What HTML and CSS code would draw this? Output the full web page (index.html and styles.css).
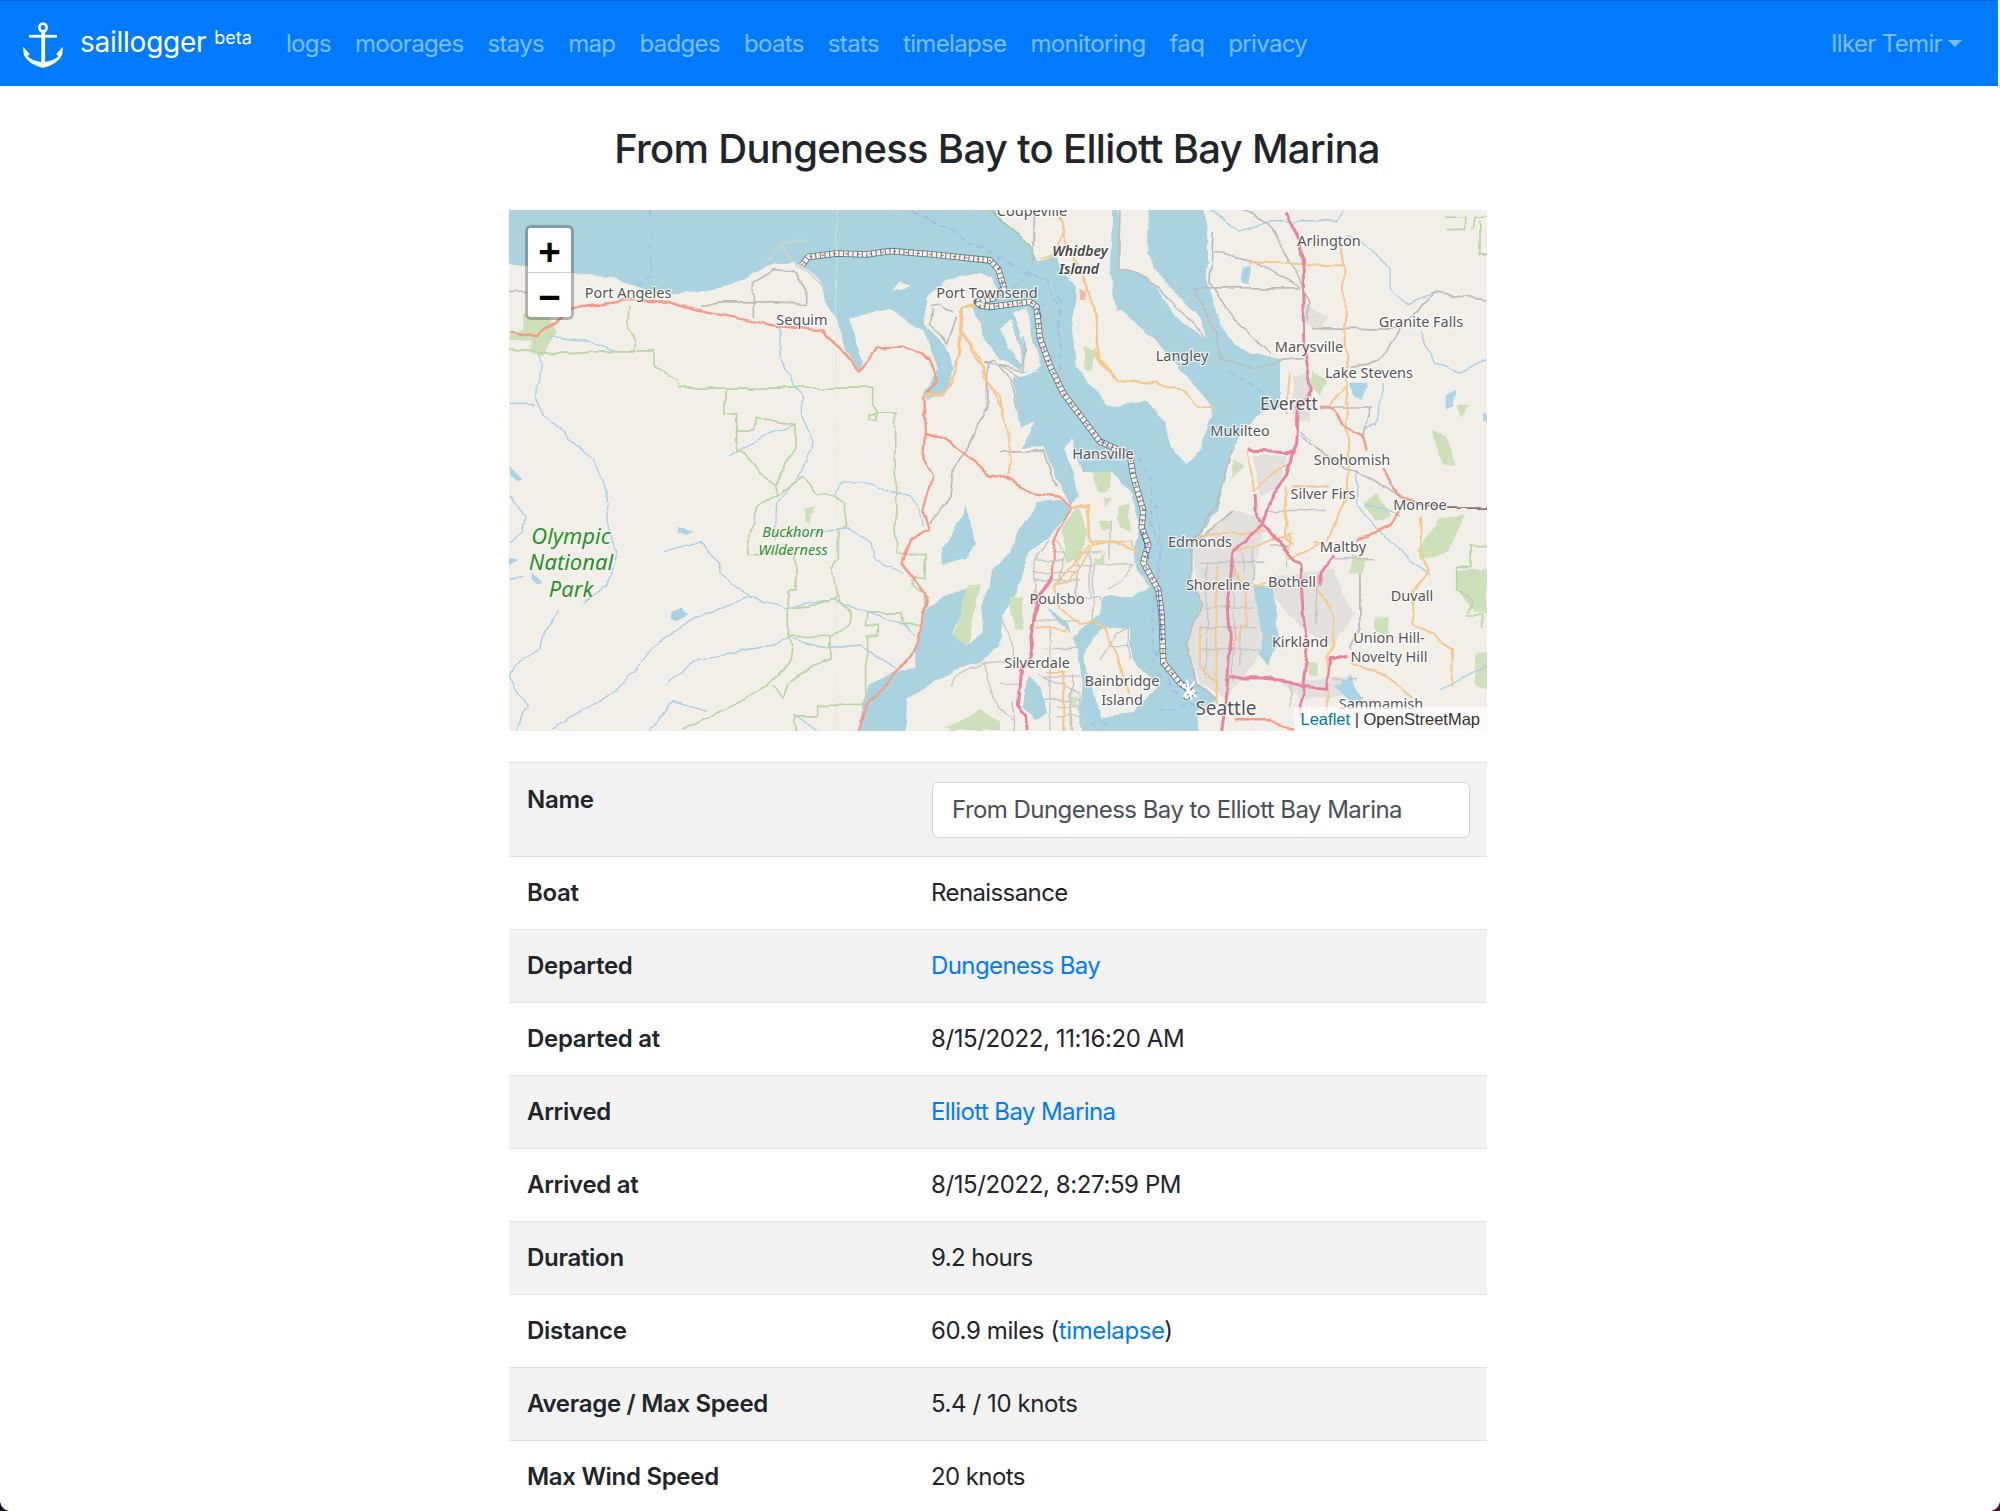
FILE: index.html
```html
<!DOCTYPE html>
<html lang="en">

<head>
  <meta charset="UTF-8">
  <title>From Dungeness Bay to Elliott Bay Marina</title>
  <link rel="stylesheet" href="styles.css">
</head>

<body>
  <nav class="navbar">
    <a class="brand" href="#">
      <svg class="anchor" viewBox="0 0 46 50" width="40" height="46" preserveAspectRatio="none">
        <circle cx="23" cy="6" r="4.2" fill="none" stroke="#fff" stroke-width="3"/>
        <rect x="21" y="10" width="4.4" height="36" fill="#fff"/>
        <rect x="7" y="14" width="32" height="3" fill="#fff"/>
        <path d="M0 27 L1 36 Q6 46 23 50 Q40 46 45 36 L46 27 L38 35 L41 37 Q36 42 23 44 Q10 42 5 37 L8 35 Z" fill="#fff"/>
      </svg>
      <span class="brand-name">saillogger</span>
      <sup class="beta">beta</sup>
    </a>
    <ul class="nav-links">
      <li><a href="#">logs</a></li>
      <li><a href="#">moorages</a></li>
      <li><a href="#">stays</a></li>
      <li><a href="#">map</a></li>
      <li><a href="#">badges</a></li>
      <li><a href="#">boats</a></li>
      <li><a href="#">stats</a></li>
      <li><a href="#">timelapse</a></li>
      <li><a href="#">monitoring</a></li>
      <li><a href="#">faq</a></li>
      <li><a href="#">privacy</a></li>
    </ul>
    <a class="user" href="#">Ilker Temir<i class="caret"></i></a>
  </nav>

  <main class="content">
    <h1 class="title">From Dungeness Bay to Elliott Bay Marina</h1>

    <div class="map">
      <svg class="map-tiles" viewBox="509 210 978 521" width="978" height="521">
        <defs>
          <filter id="soft" x="0" y="0" width="100%" height="100%">
            <feTurbulence type="fractalNoise" baseFrequency="0.05" numOctaves="2" seed="4" result="noise"/>
            <feDisplacementMap in="SourceGraphic" in2="noise" scale="7" xChannelSelector="R" yChannelSelector="G"/>
            <feGaussianBlur stdDeviation="0.6"/>
          </filter>
          <filter id="blur"><feGaussianBlur stdDeviation="0.35"/></filter>
          <path id="route" d="M905 190 L925 165 L1010 155 L1100 158 L1170 148 L1300 158 L1470 175 L1495 200 L1512 255 L1480 285 L1430 295 L1440 305 L1470 310 L1590 295 L1610 310 L1620 400 L1650 480 L1690 560 L1800 700 L1890 740 L1900 800 L1930 900 L1925 950 L1945 1000 L1930 1050 L1975 1130 L1985 1200 L1990 1340 L2040 1400 L2070 1420 L2060 1440 L2085 1420"/>
        </defs>
        <rect class="land" x="509" y="210" width="978" height="521"/>

        <g filter="url(#soft)">
          <!-- water, then land on top of it -->
          <polygon class="water" points="490,190 1203,190 1207,234 1207,279 1217,314 1227,338 1250,352 1280,359 1280,379 1280,407 1260,414 1240,435 1233,448 1227,473 1217,510 1193,545 1192,580 1202,604 1187,645 1197,683 1217,700 1197,711 1200,750 850,750 857,731 870,683 897,673 913,670 918,640 925,610 943,597 943,565 937,533 930,525 935,518 926,400 923,393 938,370 933,353 923,330 907,320 887,308 873,310 850,320 855,340 862,363 860,370 845,350 838,322 828,307 820,280 793,262 783,263 753,272 733,285 700,292 667,295 640,287 610,277 573,274 533,268 490,260"/>
          <polygon class="land" points="925,325 925,300 932,290 948,280 980,272 993,277 997,290 990,300 973,305 985,340 1000,360 1015,365 1025,372 1040,372 1012,378 1020,428 1033,421 1023,448 1043,447 1060,486 1073,505 1060,500 1037,502 1033,510 1013,543 1000,563 993,570 980,607 983,633 967,643 953,633 960,617 967,587 943,597 930,525 924,403 947,389 953,367 945,345"/>
          <polygon class="water" points="965,503 977,543 967,557 943,565 942,550 960,520"/>
          <polygon class="land" points="1000,327 1010,318 1017,343 1023,363 1017,360 1007,347"/>
          <polygon class="land" points="1013,313 1027,307 1033,340 1042,367 1033,373 1023,370 1025,350"/>
          <polygon class="land" points="893,290 900,281 911,285"/>
          <polygon class="land" points="980,190 1007,227 1030,243 1037,262 1053,255 1077,287 1072,321 1077,366 1105,404 1117,407 1147,400 1163,421 1170,448 1187,464 1200,448 1213,414 1210,404 1157,341 1122,310 1100,314 1118,314 1110,269 1113,190"/>
          <polygon class="land" points="1118,190 1120,269 1147,276 1180,321 1210,341 1200,317 1167,286 1147,252 1148,190"/>
          <polygon class="land" points="1070,438 1082,473 1113,473 1130,493 1140,528 1133,550 1137,570 1150,587 1133,597 1103,597 1100,613 1073,637 1083,680 1080,720 1080,750 905,750 907,700 953,670 980,663 1000,647 1002,617 1017,593 1030,553 1050,537 1068,515 1075,500 1078,495 1075,475 1065,450"/>
          <polygon class="land" points="1083,657 1100,630 1130,627 1130,657 1157,687 1147,697 1133,713 1100,717 1090,677"/>
          <polygon class="water" points="1027,677 1040,687 1047,713 1037,720 1023,707"/>
          <polygon class="water" points="1047,607 1067,623 1070,633 1053,617"/>
          <polygon class="water" points="1255,583 1272,588 1280,640 1268,668 1253,640"/>
          <polygon class="land" points="1224,711 1240,700 1290,750 1210,750"/>

          <!-- west half of the map, coordinates of a 3x crop -->
          <g transform="translate(500 200) scale(0.3333 0.345)">
            <line class="seam" x1="1010" y1="30" x2="1010" y2="1545"/>
            <path class="park" d="M70 330 L150 340 L170 385 L130 450 L95 445 L95 410 L27 405 L27 385 L70 370Z"/>
            <path class="river" d="M120 440 V520 L105 570 L130 620 L200 680 L280 750 L320 840 L325 930 L350 1020 L320 1120 L250 1165"/>
            <path class="river" d="M27 590 H105 M27 860 L75 910 L70 960 L27 990 M27 1100 L70 1090 M180 1190 L130 1250 L120 1300 L40 1350 L27 1380 L85 1470 L40 1540"/>
            <path class="river" d="M490 1020 L600 990 L650 1040 L665 1085 L750 1150 L860 1185 L1000 1155 L1080 1190 L1190 1220 L1250 1260"/>
            <path class="river" d="M750 1150 L590 1210 L490 1270 L340 1430 L160 1530 M490 1400 L600 1330 L780 1300 L870 1270 L990 1300 L1080 1290 L1190 1360"/>
            <path class="river" d="M840 370 V450 L880 540 L910 570 V630 L940 700 L910 780 L830 880 L825 990 M690 745 L800 680 L885 650"/>
            <path class="river" d="M1005 850 L1020 820 H1110 L1170 850 H1230 L1260 900 L1270 950 M860 980 L1040 950 L1110 990 L1120 1040 L1210 1080 M450 1540 L520 1450 L620 1480 M880 1490 L960 1540 M150 395 L270 410 L350 440"/>
            <path class="lake" d="M30 775 L50 790 L70 810 L50 815 L30 800Z M535 945 L580 955 L560 965 L535 960Z M520 1190 L545 1175 L565 1200 L530 1220 L512 1215Z M95 1080 L130 1110 L115 1115 L95 1095Z M27 1035 L52 1040 L27 1055Z"/>
            <path class="boundary" d="M27 435 L220 445 L280 440 H462 V480 L530 520 L535 545 H1115 V595 L1130 618 H1183 L1190 1025 H1275 V1095 H1240 V1125 L1275 1140 L1265 1230 H1205 V1197 H1100 V1230 H1135 V1265 H1100 V1440 L1090 1465 H950 V1495 H885 V1540"/>
            <path class="boundary" d="M675 548 V620 H710 V725 L740 730 L780 790 L830 825 V855 L770 890 L750 970 V1025 H885 V1130 H865 V1265 L875 1300 L870 1340 L800 1410 L700 1465 L620 1500 L550 1540"/>
            <path class="boundary" d="M830 825 L855 770 L885 710 V650 L820 640 L770 630 L765 670 H710 M830 855 L910 800 L945 850 L1005 855 L1030 880 L1040 945 L1015 950 V1040 L995 1070 L1005 1140 L1010 1150 L930 1180 L870 1185 M1010 1150 L1050 1190 V1230 L990 1270 V1330 L940 1350 L870 1400 L850 1440 L820 1410 M865 1265 H990 M390 310 L385 370 L405 410 V440 M1110 620 H1130 V636 H1110Z"/>
            <path class="park" d="M920 890 L945 890 L935 935 L918 930Z"/>
            <path class="minor" d="M600 310 L660 295 H820 L920 300 M760 340 V240 L820 205 L880 210 L920 260 V300 M27 265 H80"/>
            <path class="spit" d="M790 195 L850 130 L920 112 M850 135 L885 190 L990 260"/>
            <path class="dashed" d="M445 30 L455 220 L400 250 M1235 30 L1500 170"/>
            <path class="minor" d="M1460 470 V600 L1400 720 L1360 780 L1350 860 L1290 940"/>
            <path class="trunk" d="M27 378 L110 395 L180 345 L220 310 L380 290 L500 295 L590 320 L830 365 L960 378 L1020 430 L1080 495 L1125 430 L1210 428 L1290 460 L1310 520 L1270 570 L1275 670 L1270 750 L1300 800 L1270 900 L1290 960 L1230 980 L1205 1050 L1280 1150 L1250 1300 L1150 1420 L1110 1450 L1070 1540"/>
            <path class="trunk" d="M1275 675 L1330 690 L1400 735 L1470 795 L1500 800"/>
            <path class="secondary" d="M1270 570 L1330 565 L1365 500 L1385 380 L1390 310 L1430 300 M1385 380 L1440 460 L1450 515 L1500 570"/>
            <path class="park" d="M1400 1110 L1440 1110 L1420 1210 L1400 1290 L1365 1270 L1380 1200Z M1330 1530 L1380 1510 L1430 1490 L1450 1540 Z"/>
          </g>

          <!-- east half of the map -->
          <g transform="translate(1000 200) scale(0.3333 0.345)">
            <path class="urban" d="M575 1000 L700 900 L800 920 L780 1000 L760 1100 L790 1300 L680 1450 L600 1400 L560 1290 L600 1170Z"/>
            <path class="urban" d="M800 1090 L1000 1070 L1060 1200 L1000 1290 L900 1240 L830 1160Z"/>
            <path class="urban" d="M850 1400 L1050 1380 L1070 1430 L900 1450Z M760 740 L860 740 L840 830 L780 860Z M910 300 L985 340 L960 370 L910 360Z M880 510 L930 500 L930 640 L880 640Z"/>
            <path class="park" d="M1300 670 L1335 680 L1370 765 L1335 770 L1310 730Z M1090 880 L1130 850 L1170 920 L1130 930Z M1320 920 L1395 915 L1340 1020 L1260 1045 L1255 1010Z M250 430 L290 440 L270 500 L255 490Z M280 790 L335 790 L325 850 L295 850Z M350 920 L385 900 L390 960 L360 945Z M190 950 L235 890 L260 960 L245 1040 L195 1030Z M275 1060 L320 1020 L310 1060Z M30 1150 L70 1150 L60 1220 L30 1200Z M920 1340 L950 1340 L950 1380 L925 1380Z M1120 1210 L1170 1210 L1160 1260 L1125 1250Z M1060 1030 L1095 1040 L1090 1080 L1050 1080Z M1370 1075 L1462 1070 V1200 L1420 1190 L1370 1130Z M1430 1320 L1462 1310 V1420 L1420 1400Z M1370 600 L1405 590 L1385 630Z M940 490 L980 530 L960 570 L935 540Z M700 750 L730 770 L700 810Z"/>
            <path class="boundary" d="M1335 50 H1400 V85 H1340 M1420 85 L1425 50 H1462 M1440 60 V160 H1462 M1462 1005 H1410 V1065 H1370 V1130 L1420 1165 L1400 1200 H1445 V1240"/>
            <path class="lake" d="M725 190 L750 190 L745 245 L722 240Z M1050 530 L1100 530 L1090 580 L1060 570Z M1060 1410 L1050 1380 L1000 1410 L1050 1450 L1075 1470 L1090 1440Z M1340 570 L1370 550 L1360 600 L1340 610Z M1450 620 H1470 V645 H1450Z"/>
            <path class="river" d="M1040 100 L1100 130 L1170 200 V260 L1220 300 L1300 270 M1260 380 L1300 470 L1370 500 L1460 460 M900 670 L940 700 M1070 780 V880 L1170 990 L1240 1050 L1290 1090 M630 30 L720 90 L820 60 H1010 L1040 30 M1150 530 L1130 650 L1095 660 M1320 1420 L1462 1350 M1100 880 L1200 920"/>
            <path class="grid" d="M600 1050 H790 M600 1110 H760 M610 1180 H760 M600 1240 H770 M600 1300 H780 M620 1050 V1390 M700 1020 V1400 M760 1000 V1100 M720 1230 V1350 M810 1000 H860 V1060 M810 900 H980 M730 1020 V1080 M840 1120 H950 V1230 M870 1400 V1470 M1000 1390 H1070 M1000 1040 H1120 M1080 1100 V1230 M150 1020 H310 M100 1080 H230 M100 1130 V1250 M230 1000 V1150 M280 1050 V1220 M100 1220 H240 M140 1300 H230 M130 1380 H240 M130 1450 H240 M190 1370 V1540 M215 1370 V1540"/>
            <path class="minor" d="M720 30 L810 70 L900 230 L930 300 L925 350 M580 255 H900 M580 255 L650 380 L660 460 L770 490 L840 465 L910 460 M640 150 L760 180 L900 250 M640 90 L630 240 L690 330 L760 400 L810 445 M940 370 L1200 375 L1130 470 L1040 480 M1200 375 L1300 270 L1460 290 M900 680 L1000 760 L1100 800 L1250 880 M1110 600 L1090 690 M960 600 H1120 M575 1000 L700 900 M700 720 L650 880 L575 1000 L575 1100 L605 1170 L560 1290 L590 1400 L650 1450 M1080 1080 V1240 L1050 1300 M360 30 L355 200 L440 220 L630 410 M100 30 L100 190 M0 480 L70 520 M0 730 H130 L170 830"/>
            <path class="secondary" d="M180 50 L190 90 M250 230 L285 320 L295 460 L350 525 L470 530 L490 540 L550 550 L590 600 L645 600 M1020 130 L1030 190 L1040 500 L1045 700 L1040 860 L985 990 M745 180 L1030 190 M990 590 L1040 540 M870 500 L860 620 M740 730 L760 840 L870 760 M700 1020 L870 970 L860 1040 M600 970 L800 965 M860 830 L855 980 L880 1000 M880 830 H990 M940 990 L960 1000 L860 1040 M1260 920 L1265 1030 L1285 1080 L1240 1130 V1230 L1360 1300 L1355 1410 M1050 1340 L1170 1390 L1240 1440 M650 1060 V1460 M600 1240 V1350 L650 1400 M700 1075 L740 1130 V1230 L690 1290 M760 1120 L800 1110 M950 1130 L1000 1200 V1290 L980 1330 V1500 M0 570 L35 750 L20 800 M210 890 H260 L270 990 H340 L410 1020 M270 1000 L200 1080 L160 1120"/>
            <path class="trunk" d="M0 800 L100 850 L180 860 L220 890 L160 990 L155 1100 M960 597 H990 L1030 650 L1090 680 L1100 730 M1200 905 L1170 940 L1100 980 L1070 985 M1150 780 L1200 860 L1250 880 M700 1505 H810 L880 1540"/>
            <path class="motorway" d="M855 30 L900 120 L910 200 L915 440 L935 550 L895 600 L890 710 L875 740 L860 800 L820 850 L790 940 L700 1020 L680 1150 L690 1300 L680 1440 L665 1540"/>
            <path class="motorway" d="M790 940 L830 980 L900 1060 L910 1200 L925 1290 L910 1400 L905 1500 M740 725 L880 730 M765 850 L770 920 L790 940 M690 1385 H780 L870 1395 L905 1410 L980 1415 L990 1330 L1045 1320 M960 1120 V1080 L1000 1030 M155 1100 L110 1150 L95 1280 L90 1320"/>
            <path class="dark-road" d="M1250 880 L1300 890 H1462"/>
            <path class="dashed" d="M180 290 V400 L190 460 M20 175 L60 210 L100 215 L160 240 L180 290 M400 720 L460 820 L450 930 L480 1020 L460 1200 L460 1290 L520 1420 L580 1460 L470 1480 M690 500 L790 560"/>
          </g>

          <!-- Whidbey and the Quimper peninsula, crop at (820,210) -->
          <g transform="translate(820 210) scale(0.3333)">
            <path class="shore" d="M510 0 L560 50 L630 100 L650 155"/>
            <path class="secondary" d="M660 145 L700 130 L730 70 L790 200 L830 320 V440 L880 510 M720 20 L735 70"/>
            <path class="minor" d="M640 30 V100 M330 290 L360 285 L400 310 M340 300 L335 345 L380 400 L410 320 M490 460 L520 450 L570 510 L590 600 M500 510 V600 M490 460 L560 470 L615 485 L610 380"/>
            <path class="secondary" d="M465 285 L425 295 L420 360 L400 510 L370 550 L310 555 M420 360 L490 480 L500 510 L550 600"/>
            <path class="park" d="M800 440 L825 410 L820 480 L800 480Z"/>
            <path class="urban-pink" d="M778 240 L800 250 L795 270 L780 270Z"/>
            <path class="dashed" d="M280 5 L600 170 L680 215 L715 290 L720 480 M640 190 L570 240"/>
          </g>

          <!-- Kitsap and Bainbridge, crop at (880,500) -->
          <g transform="translate(880 500) scale(0.3333)">
            <path class="park" d="M600 30 L620 90 L590 180 L560 190 L550 120Z M280 250 L300 250 L265 430 L220 400 L255 340Z M395 290 L425 290 L430 390 L405 380Z M670 0 H700 L680 25Z M715 20 L745 10 V70 L715 50Z M660 60 H690 V80 L665 85Z M640 170 L680 190 L640 200Z M200 690 L250 660 L300 630 L360 665 V690Z M565 590 H595 L590 620 L570 620Z"/>
            <path class="grid" d="M510 120 L465 180 V300 M470 180 H550 M530 120 L555 170 L535 250 M590 220 V290 H660 L670 320 M630 150 V290 M690 60 V180 M660 200 L760 190 L730 240 L680 270 M510 380 V690 M360 350 L400 430 V480 L310 490 L220 530 L210 560 M310 490 L340 600 L400 660 M400 480 L420 520 M360 550 H420 M470 520 L600 580 V680 M530 620 H600 M530 650 H600 M570 580 V690 M660 480 L710 400 L745 380 V480 M690 440 H745 M460 240 H600 M580 200 H640 M400 600 V690"/>
            <path class="secondary" d="M580 20 L625 15 V110 L640 135 L690 125 H750 L770 160 M640 135 L600 200 L570 240 L520 260 L540 320 L600 375 L640 360 L670 390 L710 460 L730 530 L745 580 M450 385 L510 380 L550 395 L560 385 M500 515 H550 V690"/>
            <path class="motorway" d="M515 230 L480 280 L460 370 L450 430 L455 470 L425 510 L415 620 L440 650 L445 690"/>
            <path class="dashed" d="M825 10 L845 150 L835 240 M840 440 L815 500 L900 590 M630 670 L690 660 L670 690"/>
          </g>
        </g>

        <!-- route -->
        <g filter="url(#blur)" transform="translate(500 200) scale(0.3333 0.345)">
          <use href="#route" class="track-line"/>
          <use href="#route" class="track-fill"/>
          <use href="#route" class="track-ticks"/>
          <path class="track-blue" d="M1490 290 L1510 240 M1610 310 L1625 340 M1800 690 L1830 720 M1975 1130 L1985 1280 M1925 960 L1945 1040"/>
          <path class="track-end" d="M2040 1400 L2090 1440 M2050 1440 L2085 1395 M2060 1390 L2075 1450"/>
        </g>

        <!-- place names -->
        <text class="place" x="1032" y="216">Coupeville</text>
        <text class="place" x="1329" y="246">Arlington</text>
        <text class="place place-island" x="1080" y="256">Whidbey</text>
        <text class="place place-island" x="1079" y="274">Island</text>
        <text class="place" x="628" y="298">Port Angeles</text>
        <text class="place" x="802" y="325">Sequim</text>
        <text class="place" x="987" y="298">Port Townsend</text>
        <text class="place" x="1421" y="327">Granite Falls</text>
        <text class="place" x="1309" y="352">Marysville</text>
        <text class="place" x="1182" y="361">Langley</text>
        <text class="place" x="1369" y="378">Lake Stevens</text>
        <text class="place place-big" x="1289" y="410">Everett</text>
        <text class="place" x="1240" y="436">Mukilteo</text>
        <text class="place" x="1103" y="459">Hansville</text>
        <text class="place" x="1352" y="465">Snohomish</text>
        <text class="place" x="1323" y="499">Silver Firs</text>
        <text class="place" x="1420" y="510">Monroe</text>
        <text class="place" x="1200" y="547">Edmonds</text>
        <text class="place" x="1343" y="552">Maltby</text>
        <text class="place" x="1218" y="590">Shoreline</text>
        <text class="place" x="1292" y="587">Bothell</text>
        <text class="place" x="1412" y="601">Duvall</text>
        <text class="place" x="1057" y="604">Poulsbo</text>
        <text class="place" x="1300" y="647">Kirkland</text>
        <text class="place" x="1389" y="643">Union Hill-</text>
        <text class="place" x="1389" y="662">Novelty Hill</text>
        <text class="place" x="1037" y="668">Silverdale</text>
        <text class="place" x="1122" y="686">Bainbridge</text>
        <text class="place" x="1122" y="705">Island</text>
        <text class="place" x="1381" y="709">Sammamish</text>
        <text class="place place-city" x="1226" y="715">Seattle</text>
        <text class="place-park place-park-big" x="571" y="544">Olympic</text>
        <text class="place-park place-park-big" x="571" y="570">National</text>
        <text class="place-park place-park-big" x="571" y="597">Park</text>
        <text class="place-park" x="793" y="537">Buckhorn</text>
        <text class="place-park" x="793" y="555">Wilderness</text>
      </svg>

      <div class="zoom-control">
        <a href="#">+</a>
        <a href="#">&minus;</a>
      </div>
      <div class="attribution"><a href="#">Leaflet</a> | OpenStreetMap</div>
    </div>

    <table class="details">
      <colgroup>
        <col class="label-col">
        <col>
      </colgroup>
      <tbody>
        <tr class="name-row">
          <th>Name</th>
          <td><input class="name-input" type="text" value="From Dungeness Bay to Elliott Bay Marina"></td>
        </tr>
        <tr>
          <th>Boat</th>
          <td>Renaissance</td>
        </tr>
        <tr>
          <th>Departed</th>
          <td><a href="#">Dungeness Bay</a></td>
        </tr>
        <tr>
          <th>Departed at</th>
          <td class="num">8/15/2022, 11:16:20 AM</td>
        </tr>
        <tr>
          <th>Arrived</th>
          <td><a href="#">Elliott Bay Marina</a></td>
        </tr>
        <tr>
          <th>Arrived at</th>
          <td class="num">8/15/2022, 8:27:59 PM</td>
        </tr>
        <tr>
          <th>Duration</th>
          <td>9.2 hours</td>
        </tr>
        <tr>
          <th>Distance</th>
          <td class="num">60.9 miles (<a href="#">timelapse</a>)</td>
        </tr>
        <tr>
          <th>Average / Max Speed</th>
          <td class="num">5.4 / 10 knots</td>
        </tr>
        <tr>
          <th>Max Wind Speed</th>
          <td>20 knots</td>
        </tr>
      </tbody>
    </table>
  </main>

  <i class="corner corner-left"></i>
  <i class="corner corner-right"></i>
</body>

</html>
```

FILE: styles.css
```css
html,
body {
  height: 1511px;
  margin: 0;
  overflow: hidden;
}

body {
  position: relative;
  color: #212529;
  background: #fff;
  font-family: Inter, "Liberation Sans", sans-serif;
  font-size: 24px;
  line-height: 36px;
  letter-spacing: -0.6px;
}

a {
  text-decoration: none;
}

/* top bar */
.navbar {
  display: flex;
  align-items: center;
  width: 1998px;
  height: 86px;
  padding-left: 23px;
  box-sizing: border-box;
  border-top: 1px solid #0062cc;
  background: #007bff;
  margin-bottom: 1px;
}

.brand {
  display: flex;
  align-items: center;
  color: #fff;
}

.anchor {
  display: block;
  margin-top: 2px;
}

.brand-name {
  margin: 0 0 4px 17px;
  font-size: 28px;
  letter-spacing: -0.25px;
}

.beta {
  margin: -12px 0 0 8px;
  font-size: 18px;
  line-height: 24px;
  letter-spacing: 0;
}

.nav-links {
  display: flex;
  flex: 1;
  margin: 0 0 0 22px;
  padding: 0;
  list-style: none;
}

.nav-links a,
.user {
  padding: 0 12px;
  color: rgba(255, 255, 255, 0.5);
  letter-spacing: -0.65px;
}

.user {
  margin-right: 24px;
}

.caret {
  display: inline-block;
  margin-left: 6px;
  vertical-align: 5px;
  border-top: 7px solid rgba(255, 255, 255, 0.5);
  border-left: 7px solid transparent;
  border-right: 7px solid transparent;
}

/* page */
.content {
  width: 978px;
  margin-left: 509px;
}

.title {
  margin: 0;
  padding: 38px 2px 37px 0;
  font-size: 40px;
  font-weight: 500;
  line-height: 48px;
  letter-spacing: -0.7px;
  text-align: center;
}

/* map */
.map {
  position: relative;
  height: 521px;
  overflow: hidden;
  letter-spacing: 0;
}

.map-tiles {
  display: block;
}

.land {
  fill: #f2efe9;
}

.water {
  fill: #aad3df;
}

.park {
  fill: #cde0b9;
}

.urban {
  fill: #e2e0dd;
}

.urban-pink {
  fill: #efb9ac;
}

.lake {
  fill: #a9d3e8;
}

.seam {
  stroke: #e6e4df;
  stroke-width: 2;
}

.river,
.boundary,
.minor,
.grid,
.spit,
.dashed,
.trunk,
.secondary,
.motorway,
.dark-road,
.shore,
.track-line,
.track-fill,
.track-ticks,
.track-blue,
.track-end {
  fill: none;
  stroke-linejoin: round;
}

.river {
  stroke: #a8cfe6;
  stroke-width: 4;
}

.boundary {
  stroke: #b8d5a4;
  stroke-width: 5;
}

.minor {
  stroke: #bdbcba;
  stroke-width: 5;
}

.grid {
  stroke: #c6c5c4;
  stroke-width: 4;
}

.spit {
  stroke: #cfd2d2;
  stroke-width: 5;
}

.shore {
  stroke: #9ec78e;
  stroke-width: 4;
}

.dashed {
  stroke: #a3b9e6;
  stroke-width: 4;
  stroke-dasharray: 18 14;
}

.trunk {
  stroke: #f59c87;
  stroke-width: 7;
}

.secondary {
  stroke: #f6c88b;
  stroke-width: 6;
}

.motorway {
  stroke: #e6869e;
  stroke-width: 9;
}

.dark-road {
  stroke: #8e6f74;
  stroke-width: 5;
}

.track-line {
  stroke: #5d7d84;
  stroke-width: 19;
}

.track-fill {
  stroke: #f7f1ea;
  stroke-width: 14;
  stroke-dasharray: 11 3;
}

.track-ticks {
  stroke: #e8463c;
  stroke-width: 3;
  stroke-dasharray: 8 28;
}

.track-blue {
  stroke: #1f4fd0;
  stroke-width: 2;
}

.track-end {
  stroke: #fff;
  stroke-width: 6;
}

.place,
.place-park {
  font-family: "Noto Sans", sans-serif;
  font-size: 14.5px;
  text-anchor: middle;
  paint-order: stroke;
  stroke: rgba(255, 255, 255, 0.75);
  stroke-width: 2.5px;
}

.place {
  fill: #555;
}

.place-island {
  fill: #444;
  font-style: italic;
  font-weight: 600;
  font-size: 14px;
}

.place-big {
  font-size: 17.5px;
}

.place-city {
  font-size: 19px;
}

.place-park {
  fill: #2a9128;
  font-style: italic;
  stroke: rgba(255, 255, 255, 0.4);
}

.place-park-big {
  font-size: 22px;
}

.zoom-control {
  position: absolute;
  top: 15px;
  left: 16px;
  display: flex;
  flex-direction: column;
  border: 3px solid rgba(0, 0, 0, 0.25);
  border-radius: 6px;
  background-clip: padding-box;
}

.zoom-control a {
  width: 43px;
  height: 44px;
  color: #000;
  background: #fff;
  font-family: "DejaVu Sans Mono", monospace;
  font-size: 36px;
  font-weight: bold;
  line-height: 48px;
  letter-spacing: 0;
  text-align: center;
}

.zoom-control a:first-child {
  border-bottom: 1px solid #ccc;
  border-radius: 3px 3px 0 0;
}

.zoom-control a:last-child {
  border-radius: 0 0 3px 3px;
}

.attribution {
  position: absolute;
  right: 0;
  bottom: 0;
  padding: 0 7px;
  color: #333;
  background: rgba(255, 255, 255, 0.7);
  font-family: "Liberation Sans", sans-serif;
  font-size: 16.5px;
  line-height: 24px;
}

.attribution a {
  color: #0078a8;
}

/* details table */
.details {
  width: 100%;
  margin-top: 31px;
  border-collapse: collapse;
  table-layout: fixed;
}

.label-col {
  width: 404px;
}

.details th,
.details td {
  padding: 18px;
  border-top: 1px solid #dee2e6;
  text-align: left;
  vertical-align: top;
}

.details th {
  font-weight: 600;
  letter-spacing: -0.3px;
}

.details .num {
  letter-spacing: -0.4px;
}

.details tr:nth-child(odd) {
  background: #f2f2f2;
}

.details td a {
  color: #007bff;
}

.details .name-row th,
.details .name-row td {
  padding-top: 19px;
}

.name-input {
  display: block;
  width: 100%;
  height: 56px;
  margin-left: 1px;
  padding: 0 18px 2px 19px;
  box-sizing: border-box;
  border: 1px solid #ced4da;
  border-radius: 6px;
  color: #495057;
  background: #fff;
  font: inherit;
  letter-spacing: -0.55px;
}

/* window corners of the capture */
.corner {
  position: absolute;
  bottom: 0;
  width: 10px;
  height: 10px;
}

.corner-left {
  left: 0;
  background: radial-gradient(circle at 10px 0, transparent 9.5px, #0c1c2c 10px);
}

.corner-right {
  right: 0;
  background: radial-gradient(circle at 0 0, transparent 9.5px, #4a0f30 10px);
}
```
